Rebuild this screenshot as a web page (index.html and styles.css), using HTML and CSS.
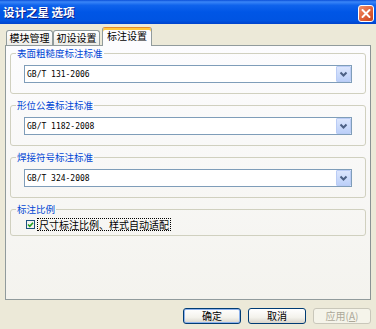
FILE: index.html
```html
<!DOCTYPE html>
<html>
<head>
<meta charset="utf-8"/>
<link rel="stylesheet" href="styles.css">
<title>设计之星 选项</title>
</head>
<body>
<div class="Window">
  <div class="TitleBar">
    <span class="Title">设计之星 选项</span>
    <span class="CloseBtn">
      <svg width="16" height="17" viewBox="0 0 16 17">
        <path d="M4.5 5 L11.5 12 M11.5 5 L4.5 12" stroke="#ffffff" stroke-width="2" stroke-linecap="round"/>
      </svg>
    </span>
  </div>

  <div class="Content">
    <div class="Tabs">
      <div class="Tab">模块管理</div>
      <div class="Tab">初设设置</div>
      <div class="Tab Active">标注设置</div>
    </div>

    <div class="Panel">
      <fieldset class="Group">
        <legend>表面粗糙度标注标准</legend>
        <div class="Combo">
          <span class="ComboValue">GB/T 131-2006</span>
          <span class="DropBtn"><svg width="15" height="16" viewBox="0 0 15 16"><polyline points="4.5,6.5 7.5,9.5 10.5,6.5" fill="none" stroke="#4D6185" stroke-width="2"/></svg></span>
        </div>
      </fieldset>

      <fieldset class="Group">
        <legend>形位公差标注标准</legend>
        <div class="Combo">
          <span class="ComboValue">GB/T 1182-2008</span>
          <span class="DropBtn"><svg width="15" height="16" viewBox="0 0 15 16"><polyline points="4.5,6.5 7.5,9.5 10.5,6.5" fill="none" stroke="#4D6185" stroke-width="2"/></svg></span>
        </div>
      </fieldset>

      <fieldset class="Group">
        <legend>焊接符号标注标准</legend>
        <div class="Combo">
          <span class="ComboValue">GB/T 324-2008</span>
          <span class="DropBtn"><svg width="15" height="16" viewBox="0 0 15 16"><polyline points="4.5,6.5 7.5,9.5 10.5,6.5" fill="none" stroke="#4D6185" stroke-width="2"/></svg></span>
        </div>
      </fieldset>

      <fieldset class="Group Small">
        <legend>标注比例</legend>
        <div class="CheckRow">
          <span class="CheckBox"><svg width="7" height="7" viewBox="0 0 7 7"><polyline points="1,3.5 2.8,5.3 6,1.8" fill="none" stroke="#21A121" stroke-width="1.6"/></svg></span>
          <span class="CheckLabel">尺寸标注比例、样式自动适配</span>
        </div>
      </fieldset>
    </div>

    <div class="Buttons">
      <div class="Btn Default">确定</div>
      <div class="Btn">取消</div>
      <div class="Btn Disabled">应用(<u>A</u>)</div>
    </div>
  </div>
</div>
</body>
</html>
```

FILE: styles.css
```css
body {
  margin: 0;
  background-color: #ECE9D8;
  font-family: "Noto Sans CJK SC", sans-serif;
  font-size: 10px;
  color: #000000;
}

.Window {
  width: 376px;
  height: 329px;
  display: flex;
  flex-direction: column;
}

/* title bar */
.TitleBar {
  height: 24px;
  box-sizing: border-box;
  display: flex;
  align-items: center;
  justify-content: space-between;
  padding: 0 2px 0 3px;
  background: linear-gradient(to bottom, #0A4FD8 0%, #3A86F8 8%, #0F63EC 22%, #0056E6 50%, #0054E2 85%, #0043CC 100%);
}

.Title {
  color: #ffffff;
  font-weight: bold;
  font-size: 11.5px;
  text-shadow: 1px 1px #0A1E8A;
}

.CloseBtn {
  width: 16px;
  height: 17px;
  margin-top: 3px;
  box-sizing: border-box;
  border: 1px solid #ffffff;
  border-radius: 3px;
  background: linear-gradient(135deg, #F0906C 0%, #E2653C 50%, #C8431C 100%);
  display: flex;
  align-items: center;
  justify-content: center;
}

.CloseBtn svg {
  margin: -1px;
}

.Content {
  flex: 1;
  padding: 3px 5px 0 5px;
  display: flex;
  flex-direction: column;
}

/* tabs */
.Tabs {
  height: 19px;
  margin-bottom: -1px;
  padding-left: 1px;
  display: flex;
  align-items: flex-start;
}

.Tab {
  width: 47px;
  height: 16px;
  margin-top: 3px;
  box-sizing: border-box;
  border: 1px solid #919B9C;
  border-bottom: none;
  border-radius: 3px 3px 0 0;
  background: linear-gradient(to bottom, #FFFFFF, #ECEBE6);
  text-align: center;
  line-height: 14px;
}

.Tab.Active {
  width: 50px;
  height: 19px;
  margin-top: 0;
  margin-left: 2px;
  position: relative;
  z-index: 1;
  border-top: 1px solid #E68B2C;
  box-shadow: inset 0 2px #FFC83C;
  background: #FCFCFE;
  line-height: 16px;
}

/* tab page */
.Panel {
  height: 255px;
  box-sizing: border-box;
  border: 1px solid #919B9C;
  border-right-color: #8A9394;
  background: linear-gradient(to bottom, #FCFCFE, #F4F3EE);
  padding: 1px 4px 0 4px;
  display: flex;
  flex-direction: column;
  gap: 5px;
}

.Group {
  margin: 0;
  padding: 6px 13px 10px 13px;
  border: 1px solid #D0D0BF;
  border-radius: 3px;
  min-width: 0;
}

.Group legend {
  margin-left: -8px;
  padding: 0 1px;
  color: #0046D5;
  font-size: 9.5px;
  line-height: 12px;
}

.Group.Small {
  padding-top: 3px;
  padding-bottom: 4px;
}

.Combo {
  height: 18px;
  box-sizing: border-box;
  border: 1px solid #7F9DB9;
  background-color: #ffffff;
  display: flex;
  align-items: center;
  justify-content: space-between;
  padding: 0 0 0 2px;
}

.ComboValue {
  font-family: "DejaVu Sans Mono", monospace;
  font-size: 8px;
}

.DropBtn {
  width: 15px;
  height: 16px;
  box-sizing: border-box;
  border: 1px solid #BACCF5;
  border-radius: 1px;
  background: linear-gradient(to bottom, #DCE6FD, #BCD0F9);
  display: flex;
}

.DropBtn svg {
  margin: -1px;
}

.CheckRow {
  height: 13px;
  margin-left: 2px;
  display: flex;
  align-items: center;
  gap: 2px;
}

.CheckBox {
  width: 9px;
  height: 9px;
  box-sizing: border-box;
  border: 1px solid #1C5180;
  background-color: #F4F4F0;
  display: flex;
}

.CheckLabel {
  border: 1px dotted #000000;
  padding: 0 1px;
  line-height: 11px;
  font-size: 10px;
}

/* bottom buttons */
.Buttons {
  margin-top: 8px;
  display: flex;
  justify-content: flex-end;
  gap: 7px;
}

.Btn {
  width: 58px;
  height: 16px;
  box-sizing: border-box;
  border: 1px solid #003C74;
  border-radius: 3px;
  background: linear-gradient(to bottom, #FFFFFF 0%, #F3F2EC 60%, #D9D5CB 100%);
  text-align: center;
  line-height: 14px;
}

.Btn.Default {
  box-shadow: inset 0 0 0 1px #8EB2EC;
}

.Btn.Disabled {
  border-color: #C9C7BA;
  background: #F5F4EA;
  color: #ACA899;
}
```
